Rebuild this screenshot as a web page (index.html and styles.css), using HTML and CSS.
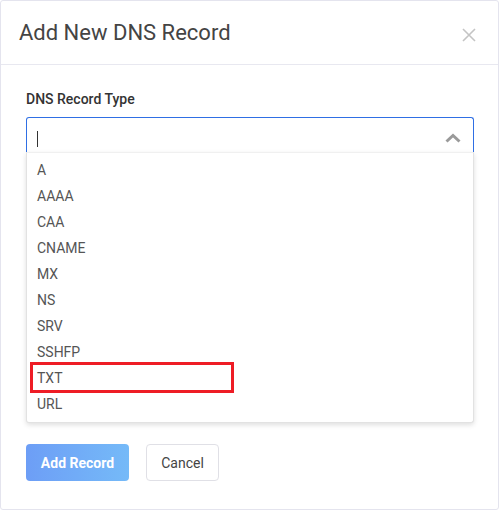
FILE: index.html
```html
<!DOCTYPE html>
<html>
<head>
<meta charset="utf-8">
<link rel="stylesheet" href="styles.css">
</head>
<body>
<div class="modal">
  <div class="modal-header">
    <h2 class="modal-title">Add New DNS Record</h2>
    <svg class="close" width="14" height="14" viewBox="0 0 14 14"><path d="M1 1L13 13M13 1L1 13" stroke="#c4c4c4" stroke-width="1.6" fill="none"/></svg>
  </div>
  <div class="modal-body">
    <label class="field-label">DNS Record Type</label>
    <div class="select">
      <div class="select-input">
        <span class="caret"></span>
        <svg class="chevron" width="16" height="10" viewBox="0 0 16 10"><path d="M1.5 8.5L8 2.5L14.5 8.5" stroke="#9a9a9a" stroke-width="3" fill="none"/></svg>
      </div>
      <ul class="menu">
        <li>A</li>
        <li>AAAA</li>
        <li>CAA</li>
        <li>CNAME</li>
        <li>MX</li>
        <li>NS</li>
        <li>SRV</li>
        <li>SSHFP</li>
        <li class="marked">TXT<span class="highlight"></span></li>
        <li>URL</li>
      </ul>
    </div>
    <div class="actions">
      <button class="btn btn-primary">Add Record</button>
      <button class="btn btn-default">Cancel</button>
    </div>
  </div>
</div>
</body>
</html>
```
FILE: styles.css
```css
* { box-sizing: border-box; }
html, body { margin: 0; padding: 0; background: #fff; }
body { font-family: Roboto, "Liberation Sans", sans-serif; width: 499px; height: 510px; overflow: hidden; }
.modal {
  width: 499px; height: 510px;
  border: 1px solid #e4e4ee;
  border-radius: 3px;
  background: #fff;
}
.modal-header {
  height: 64px;
  border-bottom: 1px solid #e8e8f0;
  display: flex; align-items: center; justify-content: space-between;
  padding: 0 22px 0 18px;
}
.modal-title { margin: 0; font-size: 22px; font-weight: 400; color: #444; letter-spacing: 0; }
.close { margin-top: 4px; }
.modal-body { padding: 25px 24px 0 25px; }
.field-label { display: block; font-size: 14px; font-weight: 500; color: #333; line-height: 18px; margin-bottom: 9px; }
.select { position: relative; }
.select-input {
  height: 38px;
  border: 1px solid #2f6fe4;
  border-bottom: none;
  border-radius: 3px 3px 0 0;
  display: flex; align-items: center; justify-content: space-between;
  padding: 0 12px 0 10px;
}
.caret { width: 1px; height: 16px; background: #333; margin-top: 4px; }
.chevron { margin-top: 2px; }
.menu {
  list-style: none; margin: -3px 0 0 0; padding: 4px 0 5px 0;
  border: 1px solid #e2e2e2;
  border-top-color: #f0f0f0;
  border-radius: 0 0 3px 3px;
  box-shadow: 0 2px 5px rgba(0,0,0,0.13);
  background: #fff;
  position: relative;
}
.menu li { height: 26px; line-height: 26px; padding-left: 10px; font-size: 14px; color: #555; }
.marked { position: relative; }
.highlight {
  position: absolute; left: 3px; top: -3px; width: 204px; height: 31px;
  border: 3.5px solid #ee1c25;
}
.actions { display: flex; gap: 17px; margin-top: 21px; }
.btn {
  height: 37px; border-radius: 4px; font-family: Roboto, "Liberation Sans", sans-serif; font-size: 14px;
}
.btn-primary {
  width: 103px; border: none; color: #fff; font-weight: 700;
  background: linear-gradient(90deg, #6d9ef6, #75baf8);
}
.btn-default {
  width: 73px; border: 1px solid #e0e0e6; background: #fff; color: #444; font-weight: 400;
}
```
